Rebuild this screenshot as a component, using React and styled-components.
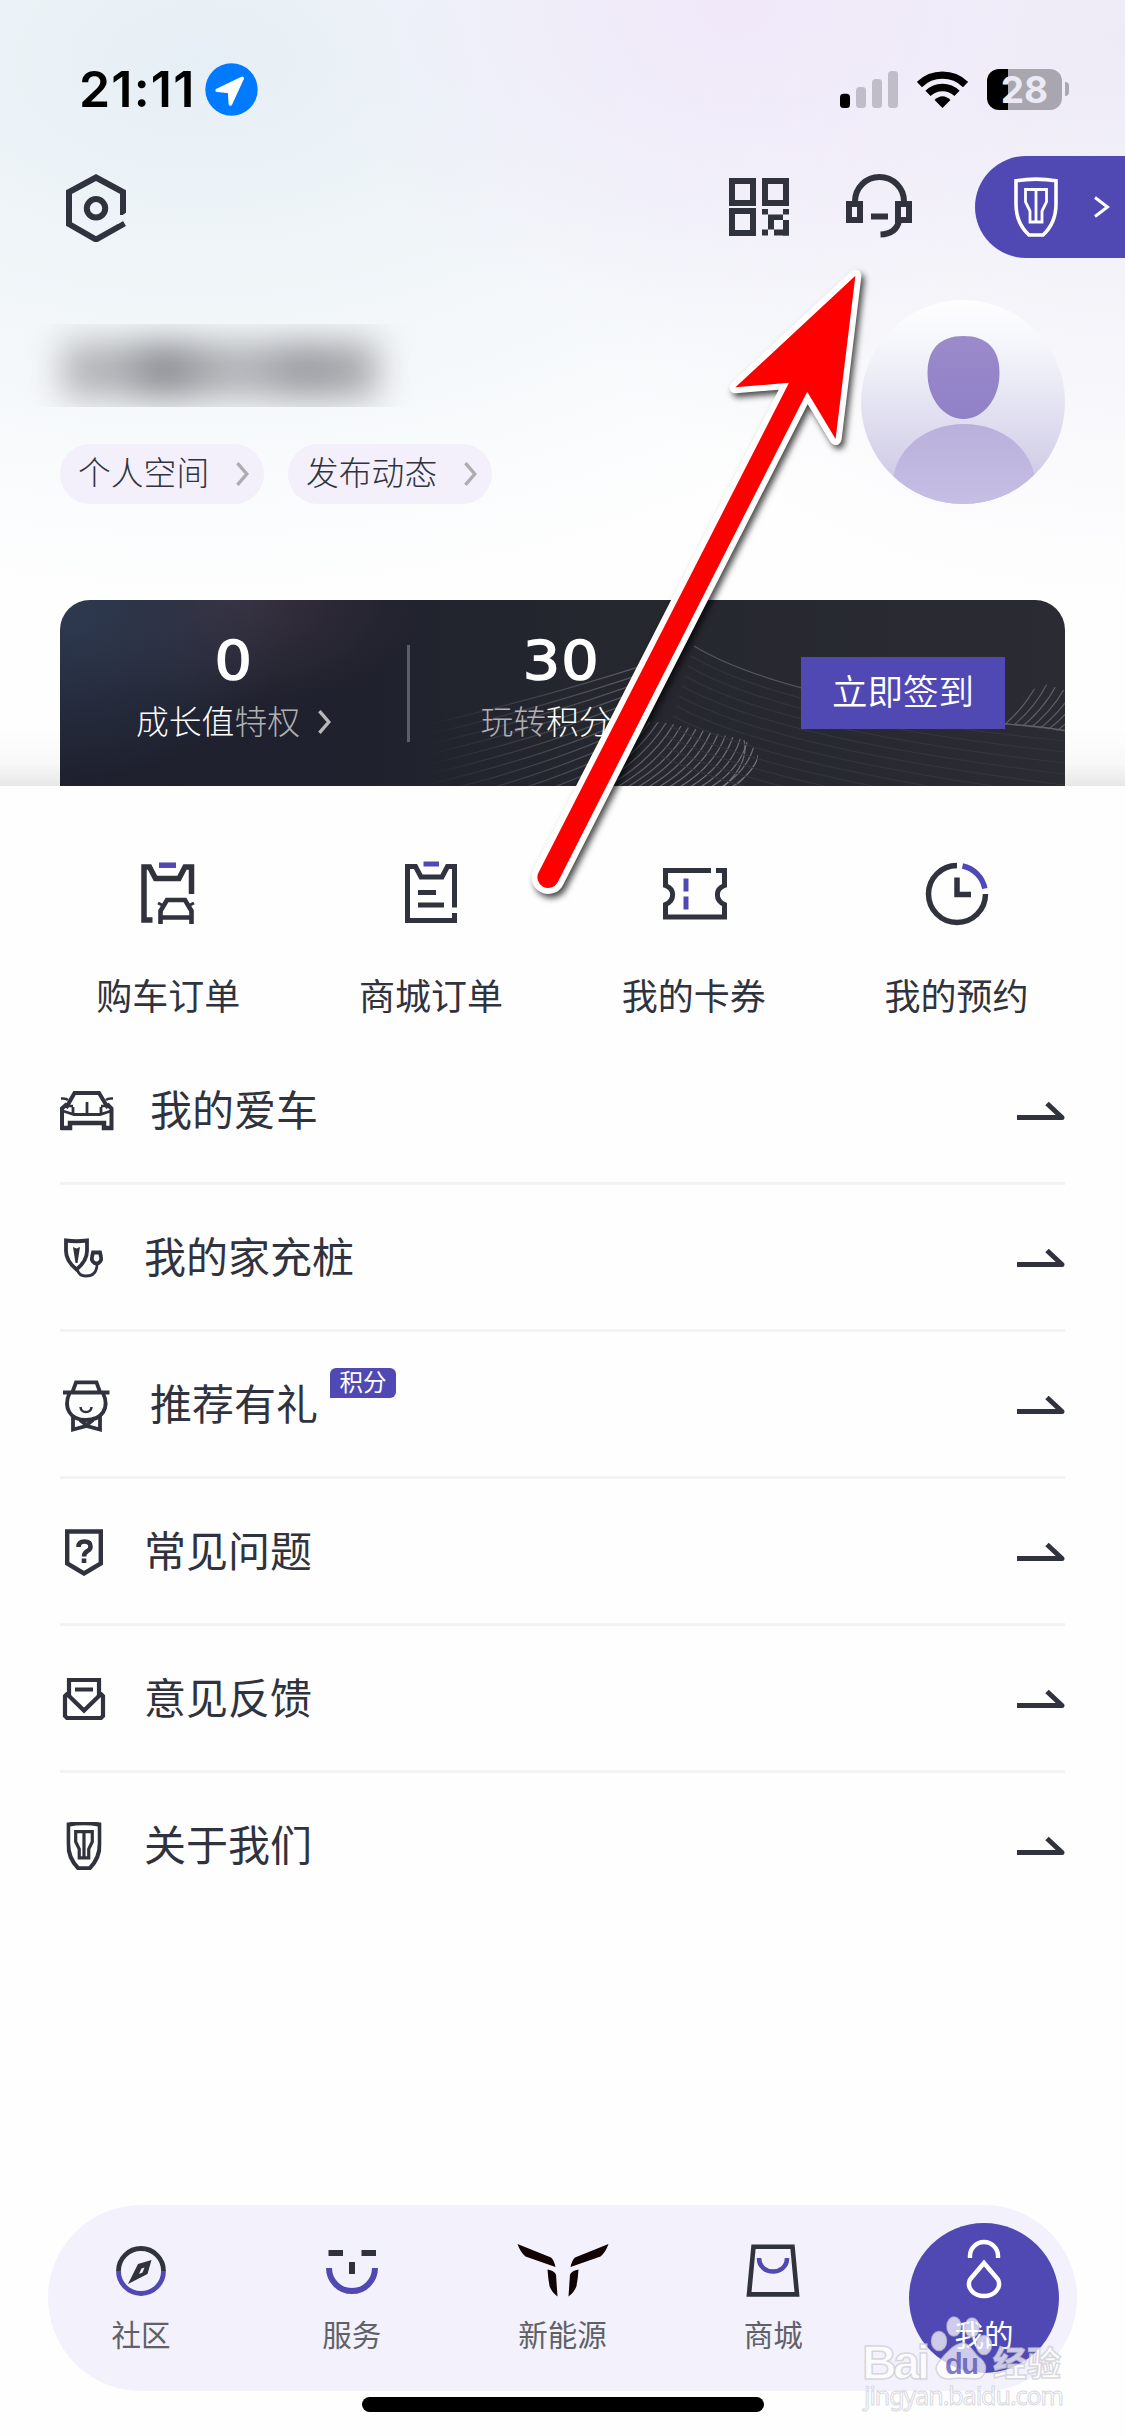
import styled, {createGlobalStyle} from 'styled-components'

const DARK = '#30333d'
const PURPLE = '#5049b4'

const GlobalStyle = createGlobalStyle`
    body {
        margin: 0;
        background: #fff;
        font-family: "Noto Sans CJK SC", "Noto Sans", sans-serif;
        color: ${DARK};
    }

    svg {
        display: block;
        flex: none;
    }
`

const AppContainer = styled.div`
    position: relative;
    display: flex;
    flex-direction: column;
    width: 1125px;
    height: 2436px;
    overflow: hidden;
    background: #fefefe;
`

const Hero = styled.div`
    height: 786px;
    background:
        linear-gradient(to top, rgba(0, 0, 0, .09), rgba(0, 0, 0, .025) 22px, rgba(0, 0, 0, 0) 58px),
        radial-gradient(ellipse 420px 330px at 730px 0, rgba(240, 230, 250, .85), rgba(242, 236, 250, 0)),
        radial-gradient(ellipse 640px 560px at 1125px 40px, #edebf6, rgba(243, 242, 250, 0)),
        radial-gradient(ellipse 900px 540px at 200px 60px, #e6eff5, rgba(240, 248, 250, 0)),
        #fefefe;
`

const StatusBar = styled.div`
    box-sizing: border-box;
    display: flex;
    justify-content: space-between;
    align-items: center;
    height: 156px;
    padding: 22px 56px 0 79px;
`

const StatusGroup = styled.div`
    display: flex;
    align-items: center;
    gap: ${props => props.gap}px;
`

const Time = styled.span`
    width: 115px;
    color: #000;
    font: 600 50px/1 Inter, sans-serif;
    letter-spacing: 1.2px;
    white-space: nowrap;
`

const Battery = styled.div`
    display: flex;
    align-items: center;
    gap: 3px;
`

const BatteryBody = styled.div`
    width: 75px;
    height: 41px;
    border-radius: 12px;
    background: linear-gradient(to right, #000 21px, #a8a6ae 21px);
    color: #ece9f6;
    font: 700 37px/41px Inter, sans-serif;
    text-align: center;
`

const BatteryTip = styled.div`
    width: 4px;
    height: 14px;
    border-radius: 0 4px 4px 0;
    background: #aaa8b1;
`

const TopNav = styled.div`
    display: flex;
    align-items: center;
    height: 102px;
    padding-left: 66px;
`

const TopActions = styled.div`
    display: flex;
    align-items: center;
    gap: 57px;
    margin-left: auto;
`

const CarEntry = styled.div`
    box-sizing: border-box;
    display: flex;
    align-items: center;
    justify-content: space-between;
    width: 150px;
    height: 102px;
    margin-left: 6px;
    padding: 0 15px 0 39px;
    border-radius: 51px 0 0 51px;
    background: ${PURPLE};
`

const Profile = styled.div`
    display: flex;
    justify-content: space-between;
    align-items: flex-end;
    height: 204px;
    margin: 42px 60px 0 0;
`

const NameMask = styled.div`
    display: flex;
    align-items: center;
    height: 83px;
    margin: 0 0 37px 20px;
    padding: 0 20px 0 42px;
    overflow: hidden;
`

const NameBlur = styled.div`
    width: 316px;
    height: 56px;
    margin-top: 8px;
    filter: blur(17px);
    background: linear-gradient(to right, #b6b8bb, #b0b2b6 18%, #85878d 32%, #a4a6ab 44%, #b5b7bb 57%, #97999f 77%, #b0b2b5);
`

const ChipRow = styled.div`
    display: flex;
    gap: 24px;
    padding-left: 60px;
`

const Chip = styled.div`
    box-sizing: border-box;
    display: flex;
    align-items: center;
    justify-content: space-between;
    width: 204px;
    height: 60px;
    padding: 0 15px 5px 18px;
    border-radius: 30px;
    background: #f3f0fb;
    font-size: 32.8px;
    font-weight: 300;
    line-height: 1;

    svg {
        margin-top: 5px;
    }
`

const MemberCard = styled.div`
    position: relative;
    display: flex;
    align-items: flex-start;
    width: 1005px;
    height: 186px;
    margin: 96px 60px 0;
    border-radius: 30px 30px 0 0;
    overflow: hidden;
    color: #fff;
    background:
        radial-gradient(ellipse 240px 170px at 0 10px, #2e3a51, rgba(46, 58, 81, 0)),
        radial-gradient(ellipse 190px 110px at 170px 0, #3a313e, rgba(58, 49, 62, 0)),
        linear-gradient(to right, #1e202e, #1f212d 30%, #25272f 52%, #2a2b33);
`

const Waves = styled.svg`
    position: absolute;
    inset: 0;
`

const Stat = styled.div`
    position: relative;
    display: flex;
    flex-direction: column;
    align-items: center;
    width: ${props => props.width}px;
    padding-top: 33px;
`

const StatValue = styled.div`
    font: 400 54px/56px "DejaVu Sans", sans-serif;
    letter-spacing: 1px;
    -webkit-text-stroke: 1.5px #fff;
    transform: scaleX(1.09);
`

const StatLabel = styled.div`
    display: flex;
    align-items: center;
    height: 34px;
    margin-top: 14px;
    font-size: 32.8px;
    font-weight: 300;
    line-height: 1;

    i {
        color: #b0b0b4;
        font-style: normal;
    }

    svg {
        margin: 4px 0 0 18px;
    }
`

const StatDivider = styled.div`
    width: 3px;
    height: 97px;
    margin-top: 45px;
    background: #5c5e68;
`

const SignButton = styled.div`
    position: relative;
    width: 204px;
    height: 72px;
    margin: 57px 60px 0 auto;
    background: ${PURPLE};
    font-size: 35.5px;
    font-weight: 350;
    line-height: 66px;
    text-align: center;
`

const Shortcuts = styled.div`
    display: grid;
    grid-template-columns: repeat(4, 1fr);
    height: 252px;
    padding: 0 37px;
`

const ShortcutItem = styled.div`
    display: flex;
    flex-direction: column;
    align-items: center;
    padding-top: 74px;
    font-size: 36px;
    line-height: 48px;

    svg {
        margin-bottom: 44px;
    }
`

const MenuList = styled.div`
    margin: 0 60px;
`

const MenuItem = styled.div`
    display: flex;
    align-items: center;
    height: 144px;
    border-bottom: 3px solid #f3f3f5;

    &:last-child {
        border-color: transparent;
    }
`

const MenuIcon = styled.div`
    padding-top: 2px;
`

const MenuLabel = styled.div`
    margin-left: 36px;
    padding-bottom: 4px;
    font-size: 42px;
    line-height: 60px;
`

const Badge = styled.div`
    width: 66px;
    height: 30px;
    margin: 0 0 42px 12px;
    border-radius: 6px 6px 6px 0;
    background: ${PURPLE};
    color: #fff;
    font-size: 23.5px;
    line-height: 27px;
    text-align: center;
`

const MenuArrow = styled.svg`
    margin-left: auto;
`

const TabBar = styled.div`
    box-sizing: border-box;
    display: flex;
    align-items: center;
    justify-content: space-between;
    height: 186px;
    margin: auto 48px 0;
    padding: 0 18px;
    border-radius: 93px;
    background: #f3f1fb;
`

const TabItem = styled.div`
    box-sizing: border-box;
    display: flex;
    flex-direction: column;
    align-items: center;
    width: 150px;
    height: 150px;
    padding-top: 13px;
    border-radius: 50%;
    background: ${props => props.$active ? PURPLE : "none"};
    color: ${props => props.$active ? "#fff" : "#5f6168"};
    font-size: 29.5px;
    line-height: 34px;
`

const TabLabel = styled.div`
    margin-top: 12px;
`

const HomeIndicator = styled.div`
    width: 402px;
    height: 15px;
    margin: 6px auto 24px;
    border-radius: 8px;
    background: #000;
`

const PointerArrow = styled.svg`
    position: absolute;
    left: 520px;
    top: 255px;
`

const Watermark = styled.svg`
    position: absolute;
    left: 855px;
    top: 2310px;
`

const Chevron = ({color}) =>
    <svg width="13" height="24" viewBox="0 0 13 24" fill="none" stroke={color} strokeWidth="3.4">
        <path d="M1.4 1.2 10.8 12 1.4 22.8" />
    </svg>

const LocationIcon = () =>
    <svg width="53" height="53" viewBox="0 0 53 53">
        <circle cx="26.5" cy="26.5" r="26.2" fill="#007aff" />
        <path d="M37.2 15.3 25.4 41 24.6 28.4 12.2 27.3Z" fill="#fff" stroke="#fff" strokeWidth="3.6" strokeLinejoin="round" />
    </svg>

const SignalIcon = () =>
    <svg width="58" height="37" viewBox="0 0 58 37" fill="#c0bdc9">
        <rect y="22.7" width="10" height="14.3" rx="3.5" fill="#000" />
        <rect x="16" y="16" width="10" height="21" rx="3.5" />
        <rect x="32" y="8" width="10" height="29" rx="3.5" />
        <rect x="48" width="10" height="37" rx="3.5" />
    </svg>

const WifiIcon = () =>
    <svg width="51" height="37" viewBox="0 0 51 37" fill="none" stroke="#000" strokeWidth="7.4">
        <path d="M2.4 13.5A33.2 33.2 0 0 1 48.6 13.5M11 22.4A20.6 20.6 0 0 1 40 22.4" />
        <path d="M25.5 37 17.6 29Q25.5 21.5 33.4 29Z" fill="#000" stroke="none" />
    </svg>

const SettingIcon = () =>
    <svg width="60" height="70" viewBox="0 0 60 70" fill="none" stroke={DARK} strokeWidth="6">
        <path d="M57 43V20L30 5.5 3 20V52L30 67.5 58.5 51.5" />
        <circle cx="30" cy="36.3" r="9.2" />
        <path d="M52 46 61 40V46.5L52 52Z" fill="#ebf3f6" stroke="none" />
    </svg>

const QrIcon = () =>
    <svg width="60" height="58" viewBox="0 0 60 58" fill="none" stroke={DARK} strokeWidth="6">
        <path d="M3 3H24V25H3ZM36 3H57V25H36ZM3 33H24V55H3Z" />
        <path
            d="M33 31H39V36.5H54V31H60V36.5H54V42H60V57.500H45V51.500H54V48H47V51.500H39V57.500H33V51.500H39V36.500H33Z"
            fill={DARK} stroke="none"
        />
        <path d="M45 42H47V51.500H45ZM47 48V42H54V48Z" fill="#f3f1fa" stroke="none" />
        <path d="M54 42H60V57.500H54Z" fill={DARK} stroke="none" />
    </svg>

const HeadsetIcon = () =>
    <svg width="66" height="70" viewBox="0 0 66 70" fill="none" stroke={DARK} strokeWidth="6">
        <path d="M9 31V29.5A24.5 24.5 0 0 1 58 29.5V31" />
        <path d="M3 32H14V48H3ZM52 32H63V48H52ZM25 44.5H42" />
        <path d="M53 49Q50 62 34.5 62.5" />
    </svg>

const ShieldLamp = ({width, height, color, strokeWidth = 3.6}) =>
    <svg width={width} height={height} viewBox="0 0 44 60" fill="none" stroke={color}>
        <path d="M2 3.8Q22 .5 42 3.8V27Q42 46 29 58H15Q2 46 2 27Z" strokeWidth={strokeWidth} />
        <path d="M11.5 12.5H32.5V25L28 34V45H16V34L11.5 25ZM22 12.5V45" strokeWidth={strokeWidth * .78} />
    </svg>

const Avatar = () =>
    <svg width="204" height="204" viewBox="0 0 204 204">
        <defs>
            <linearGradient id="avatarBg" x1="0" y1="0" x2="0" y2="1">
                <stop offset="0" stopColor="#fefefe" />
                <stop offset=".22" stopColor="#f5f6fb" />
                <stop offset="1" stopColor="#c8c3e2" />
            </linearGradient>
            <linearGradient id="avatarHead" x1="0" y1="0" x2="0" y2="1">
                <stop offset="0" stopColor="#9b8bcb" />
                <stop offset="1" stopColor="#9080c6" />
            </linearGradient>
            <linearGradient id="avatarBody" x1="0" y1="0" x2="0" y2="1">
                <stop offset="0" stopColor="#b9b0dc" />
                <stop offset="1" stopColor="#ccc5e7" />
            </linearGradient>
            <clipPath id="avatarClip"><circle cx="102" cy="102" r="102" /></clipPath>
        </defs>
        <g clipPath="url(#avatarClip)">
            <rect width="204" height="204" fill="url(#avatarBg)" />
            <ellipse cx="103" cy="184" rx="71" ry="60" fill="url(#avatarBody)" />
            <path d="M102.5 36C126 36 138.5 49 138.5 73C138.5 99 122 119 102.5 119C83 119 66.5 99 66.5 73C66.5 49 79 36 102.5 36Z" fill="url(#avatarHead)" />
        </g>
    </svg>

const range = n => Array.from({length: n}, (_, i) => i)

const CardWaves = () =>
    <Waves width="1005" height="186" viewBox="0 0 1005 186" fill="none" strokeWidth="1.2">
        <defs>
            <linearGradient id="waveFade" gradientUnits="userSpaceOnUse" x1="365" y1="0" x2="640" y2="0">
                <stop offset="0" stopColor="#85858a" stopOpacity="0" />
                <stop offset="1" stopColor="#85858a" stopOpacity=".75" />
            </linearGradient>
            <clipPath id="slopeClip"><path d="M350 50H600L575 122 520 190H350Z" /></clipPath>
            <clipPath id="hillClip"><path d="M540 190V122H592C640 124 690 132 698 155C698 168 682 180 672 190Z" /></clipPath>
            <clipPath id="edgeClip"><path d="M945 124Q962 90 985 84L1010 92V132Z" /></clipPath>
        </defs>
        {/* slope on the left of the hill */}
        <g stroke="url(#waveFade)" clipPath="url(#slopeClip)">
            {range(16).map(i =>
                <path key={i} d={`M370 ${124 + i * 10}Q${490 + i * 3} ${96 + i * 9.2} 600 ${60 + i * 7.5}`} />
            )}
        </g>
        <g stroke="url(#waveFade)" clipPath="url(#hillClip)">
            {range(17).map(i =>
                <path key={i} d={`M${500 + i * 10.4} 190Q${556 + i * 8.8} ${158 + i} ${584 + i * 7.4} ${118 + i * 1.6}`} />
            )}
            <path d="M684 140Q690 164 660 190" />
            <path d="M698 155C698 168 682 180 672 190" />
        </g>
        {range(12).map(i =>
            <path
                key={i}
                stroke={i === 0 ? "#55575b" : "#33353c"}
                d={`M${634 - i * 3} ${46 + i * 10}Q${730 - i * 3} ${104 + i * 9} 1005 ${130 + i * 11}`}
            />
        )}
        <g stroke="#5e5e60" clipPath="url(#edgeClip)">
            {range(11).map(i =>
                <path key={i} d={`M${925 + i * 10} 132Q${953 + i * 10} 112 ${968 + i * 10} 82`} />
            )}
        </g>
        <path d="M945 124Q980 126 1005 131" stroke="#626264" />
    </Waves>

const CarOrderIcon = () =>
    <svg width="66" height="66" viewBox="3 0 66 66" fill="none" stroke={DARK} strokeWidth="5.5">
        <path d="M27 5.200H44" stroke={PURPLE} />
        <path d="M20.500 60H12V7H17.500L23.500 18.500H47L53 7H59.500V34" />
        <path d="M28.500 64V51L35 40H53L59.500 51V64M28.500 57.500H59.500" strokeWidth="4.600" />
        <path d="M26 43 30 45M62 43 58 45" strokeWidth="3" />
    </svg>

const MallOrderIcon = () =>
    <svg width="66" height="66" viewBox="0 1 66 66" fill="none" stroke={DARK} strokeWidth="5">
        <path d="M25.500 5H41" stroke={PURPLE} />
        <path d="M56.500 48.500V7.500H49.500L44 18H23L17.500 7.500H9.500V61.500H56.500V54" />
        <path d="M20 33.500H38M20 46H46" />
    </svg>

const CouponIcon = () =>
    <svg width="66" height="66" viewBox="0 0 66 66" fill="none" stroke={DARK} strokeWidth="5">
        <path d="M50 10.500H4.500V25.500C14 29 14 40 4.500 44.500V57H63.500V44.500C54 40 54 29 63.500 25.500V10.500H55" />
        <path d="M25 18.500V31.500M25 36.500V49.500" stroke={PURPLE} />
    </svg>

const BookingIcon = () =>
    <svg width="66" height="66" viewBox="0 0 66 66" fill="none" stroke={DARK} strokeWidth="5.500">
        <path d="M33 5.500A28.500 28.500 0 1 0 61.500 34" />
        <path d="M38.500 6A28.500 28.500 0 0 1 60.800 28.500" stroke={PURPLE} />
        <path d="M33 17.500V34.500H47" />
    </svg>

const CarIcon = () =>
    <svg width="54" height="42" viewBox="0 0 54 42" fill="none" stroke={DARK} strokeWidth="4">
        <path d="M6 18 14.500 3H39L48 18M2 40V18.500L7 14M51.500 40V18.500L47 14" />
        <path d="M1 38H10V33H44V38H53" strokeWidth="4.500" />
        <path d="M3 21 14 24.500H40L51 21M13 17V23M41 17V23M27 12V24" strokeWidth="2.800" />
        <path d="M1 8.500Q6 8 8 10M53 8.500Q48 8 46 10M5 16H13M41 16H49" strokeWidth="2.500" />
    </svg>

const ChargerIcon = () =>
    <svg width="48" height="48" viewBox="0 0 48 48" fill="none" stroke={DARK} strokeWidth="3.800">
        <path d="M6 6.500Q16.500 8 27 6.500V17Q27 27 16.500 35.500Q6 27 6 17Z" />
        <path d="M13 13 16.500 14.500 20 13 17.500 29H15.500Z" fill={DARK} stroke="none" />
        <path d="M33 18.500H40L41 23A4.700 5 0 1 1 32 23Z" />
        <path d="M17 34Q18 42 26 42Q37 42 37 30" strokeWidth="2.800" />
    </svg>

const ReferIcon = () =>
    <svg width="54" height="54" viewBox="0 0 54 54" fill="none" stroke={DARK} strokeWidth="3.800">
        <path d="M3 14.500H49.500M12.500 14 16 4.300H36.500L40 14" />
        <path d="M9.500 15C3 30 10 42 26 42C42 42 50 30 43 15" />
        <path d="M20.500 29Q21 34 26 34Q31 34 31.500 29" strokeWidth="2.500" />
        <path d="M13 37V51.500L26.500 48 40 51.500V37M20 42 26.500 47 33 42" />
    </svg>

const FaqIcon = () =>
    <svg width="48" height="48" viewBox="0 0 48 48" fill="none" stroke={DARK} strokeWidth="4.400">
        <path d="M7.200 3.500H40.800V35.500L24 45.500 7.200 35.500Z" />
        <path d="M18.500 19Q18.500 13.500 24.500 13.500Q30.500 13.500 30.500 18.500Q30.500 21.500 27.500 23Q24 25 24 28.500M24 30.500V35" strokeWidth="4.600" />
    </svg>

const FeedbackIcon = () =>
    <svg width="48" height="48" viewBox="0 0 48 48" fill="none" stroke={DARK} strokeWidth="4.200">
        <path d="M9 22V5H39V22M15 14.500H33" />
        <path d="M8.500 19H7L5 21V41L7 43H41L43 41V21L41 19H39.500M8 20 24 35.500 40 20" />
    </svg>

const AboutIcon = () =>
    <svg width="48" height="48" viewBox="0 0 48 48">
        <g transform="translate(6.600 -.5) scale(.79 .81)">
            <ShieldLamp width={44} height={60} color={DARK} strokeWidth={5.200} />
        </g>
    </svg>

const CommunityIcon = () =>
    <svg width="72" height="68" viewBox="0 0 72 68" fill="none" strokeWidth="4.800">
        <path d="M13.500 35A22.500 22.500 0 0 1 58.500 35" stroke={DARK} />
        <path d="M13.500 35A22.500 22.500 0 0 0 58.500 35" stroke={PURPLE} />
        <path d="M46.500 24 33 28 23 48 42.500 38ZM36.500 32.500 39.500 31.500 37.500 36.500 34 38Z" fill={DARK} fillRule="evenodd" />
    </svg>

const ServiceIcon = () =>
    <svg width="72" height="68" viewBox="0 0 72 68" fill="none" strokeWidth="6">
        <path d="M12.500 17H27M45.500 17H60M36 26V38" stroke={DARK} />
        <path d="M13 32A23 23 0 0 0 59 32" stroke={PURPLE} />
    </svg>

const WING = "M.5 8 34 21.500Q37 24 38.500 31L8.500 20.500Q3.500 16.500 .5 8ZM30.500 33.500Q37 34.500 39 38.500L40.500 60.500Q34.500 56 32.500 50Q31 42 30.500 33.500Z"

const BrandIcon = () =>
    <svg width="92" height="68" viewBox="0 0 92 68" fill="#120304">
        <path d={WING} />
        <path d={WING} transform="matrix(-1 0 0 1 92 0)" />
    </svg>

const MallIcon = () =>
    <svg width="72" height="68" viewBox="0 0 72 68" fill="none" strokeWidth="4.600">
        <path d="M16.500 10.700H55.500L60 58.400H12Z" stroke={DARK} />
        <path d="M22 22C22 40 50 40 50 22" stroke={PURPLE} />
    </svg>

const MineIcon = () =>
    <svg width="72" height="68" viewBox="0 0 72 68" fill="none" stroke="#fff" strokeWidth="4.400">
        <path d="M22 22V20A14 14 0 0 1 50 20V22" />
        <path d="M36 27 22 43.500C18 52 26 60 36 60C46 60 54 52 50 43.500Z" />
    </svg>

const shortcuts = [
    {title: "购车订单", Icon: CarOrderIcon},
    {title: "商城订单", Icon: MallOrderIcon},
    {title: "我的卡券", Icon: CouponIcon},
    {title: "我的预约", Icon: BookingIcon},
]

const menus = [
    {title: "我的爱车", Icon: CarIcon},
    {title: "我的家充桩", Icon: ChargerIcon},
    {title: "推荐有礼", Icon: ReferIcon, badge: "积分"},
    {title: "常见问题", Icon: FaqIcon},
    {title: "意见反馈", Icon: FeedbackIcon},
    {title: "关于我们", Icon: AboutIcon},
]

const tabs = [
    {title: "社区", Icon: CommunityIcon},
    {title: "服务", Icon: ServiceIcon},
    {title: "新能源", Icon: BrandIcon},
    {title: "商城", Icon: MallIcon},
    {title: "我的", Icon: MineIcon, active: true},
]

const Header = () =>
    <Hero>
        <StatusBar>
            <StatusGroup gap={11}>
                <Time>21:11</Time>
                <LocationIcon />
            </StatusGroup>
            <StatusGroup gap={19}>
                <SignalIcon />
                <WifiIcon />
                <Battery>
                    <BatteryBody>28</BatteryBody>
                    <BatteryTip />
                </Battery>
            </StatusGroup>
        </StatusBar>
        <TopNav>
            <SettingIcon />
            <TopActions>
                <QrIcon />
                <HeadsetIcon />
                <CarEntry>
                    <ShieldLamp width={44} height={60} color="#fff" />
                    <svg width="16" height="22" viewBox="0 0 16 22" fill="none" stroke="#fff" strokeWidth="3">
                        <path d="M1 1.500 13.500 11 1 20.500" />
                    </svg>
                </CarEntry>
            </TopActions>
        </TopNav>
        <Profile>
            <div>
                <NameMask><NameBlur /></NameMask>
                <ChipRow>
                    <Chip>个人空间<Chevron color="#adadb0" /></Chip>
                    <Chip>发布动态<Chevron color="#adadb0" /></Chip>
                </ChipRow>
            </div>
            <Avatar />
        </Profile>
        <MemberCard>
            <CardWaves />
            <Stat width={347}>
                <StatValue>0</StatValue>
                <StatLabel>成长值<i>特权</i><Chevron color="#b8b8bb" /></StatLabel>
            </Stat>
            <StatDivider />
            <Stat width={303}>
                <StatValue>30</StatValue>
                <StatLabel><i>玩转</i>积分<Chevron color="#b8b8bb" /></StatLabel>
            </Stat>
            <SignButton>立即签到</SignButton>
        </MemberCard>
    </Hero>

const Pointer = () =>
    <PointerArrow width="370" height="660" viewBox="520 255 370 660">
        <path
            d="M855.400 275.700 735.400 387.300 789 382.700 538.800 872A10.500 10.500 0 0 0 557.600 882.500L807.200 391.700 835.600 439Z"
            fill="#f00" stroke="#fff" strokeWidth="12" strokeLinejoin="round" paintOrder="stroke"
            filter="drop-shadow(3px 4px 3px rgba(0, 0, 0, .7))"
        />
    </PointerArrow>

const SiteMark = () =>
    <Watermark width="220" height="110" viewBox="0 0 220 110" fill="#fff" fillOpacity=".72" stroke="#c8c8d0" strokeOpacity=".7" strokeWidth="1.500">
        <text x="7" y="69" fontFamily="Liberation Sans" fontWeight="700" fontSize="48" textLength="68">Bai</text>
        <ellipse cx="84" cy="31" rx="7.500" ry="9.500" />
        <ellipse cx="99" cy="16.500" rx="7" ry="9.500" />
        <ellipse cx="117" cy="17.500" rx="7" ry="9.500" />
        <ellipse cx="129" cy="35" rx="7.500" ry="9.500" />
        <path d="M107 33C116 33 118 44 126 49C134 56 131 69 120 69C112 69 103 67 95 69C84 70 78 60 83 53C89 46 97 35 107 33Z" />
        <text x="90" y="64" fontFamily="Liberation Sans" fontWeight="700" fontSize="29" fill={PURPLE} stroke="none" textLength="34">du</text>
        <text x="138" y="66" fontFamily="Noto Sans CJK SC" fontWeight="700" fontSize="34">经验</text>
        <text x="9" y="95" fontFamily="Noto Sans" fontSize="25" textLength="200" strokeWidth="1">jingyan.baidu.com</text>
    </Watermark>

function App() {
    return (
        <AppContainer>
            <GlobalStyle />
            <Header />
            <Shortcuts>
                {shortcuts.map(({title, Icon}) =>
                    <ShortcutItem key={title}>
                        <Icon />
                        {title}
                    </ShortcutItem>
                )}
            </Shortcuts>
            <MenuList>
                {menus.map(({title, Icon, badge}) =>
                    <MenuItem key={title}>
                        <MenuIcon><Icon /></MenuIcon>
                        <MenuLabel>{title}</MenuLabel>
                        {badge && <Badge>{badge}</Badge>}
                        <MenuArrow width="48" height="24" viewBox="0 0 48 24" fill="none" stroke={DARK} strokeWidth="5">
                            <path d="M0 19.500H45L30 5.500" strokeLinejoin="round" />
                        </MenuArrow>
                    </MenuItem>
                )}
            </MenuList>
            <TabBar>
                {tabs.map(({title, Icon, active}) =>
                    <TabItem key={title} $active={active}>
                        <Icon />
                        <TabLabel>{title}</TabLabel>
                    </TabItem>
                )}
            </TabBar>
            <HomeIndicator />
            <Pointer />
            <SiteMark />
        </AppContainer>
    )
}

export default App
